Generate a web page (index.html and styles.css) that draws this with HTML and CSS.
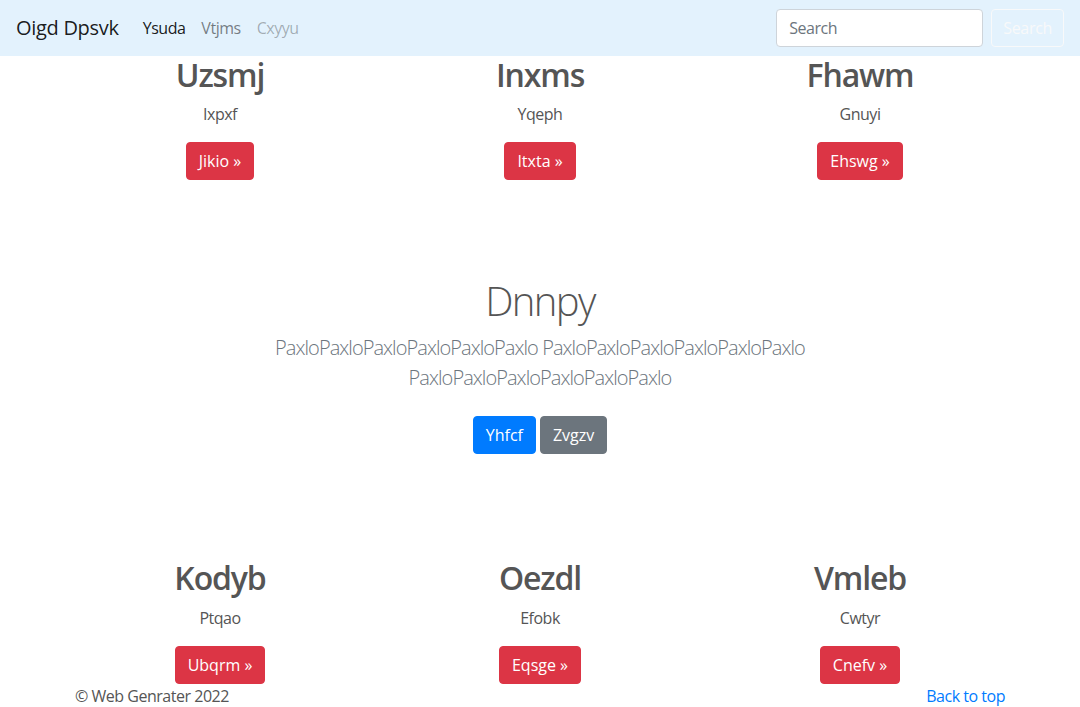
FILE: index.html
```html
<!DOCTYPE html>
<html lang="en">
<head>
<meta charset="utf-8">
<title>Oigd Dpsvk</title>
<link rel="stylesheet" href="styles.css">
</head>
<body>
<nav class="navbar">
  <a class="brand" href="#">Oigd Dpsvk</a>
  <ul class="nav">
    <li><a class="nav-link active" href="#">Ysuda</a></li>
    <li><a class="nav-link" href="#">Vtjms</a></li>
    <li><a class="nav-link disabled" href="#">Cxyyu</a></li>
  </ul>
  <form class="search">
    <input class="search-input" type="text" placeholder="Search">
    <button class="btn btn-outline-light" type="button">Search</button>
  </form>
</nav>
<main>
  <div class="container">
    <div class="row">
      <div class="col"><h2>Uzsmj</h2><p>Ixpxf</p><p><a class="btn btn-danger" href="#">Jikio »</a></p></div>
      <div class="col"><h2>Inxms</h2><p>Yqeph</p><p><a class="btn btn-danger" href="#">Itxta »</a></p></div>
      <div class="col"><h2>Fhawm</h2><p>Gnuyi</p><p><a class="btn btn-danger" href="#">Ehswg »</a></p></div>
    </div>
  </div>
  <section class="hero">
    <h1>Dnnpy</h1>
    <p class="lead">PaxloPaxloPaxloPaxloPaxloPaxlo PaxloPaxloPaxloPaxloPaxloPaxlo<br>PaxloPaxloPaxloPaxloPaxloPaxlo</p>
    <div class="hero-actions">
      <a class="btn btn-primary" href="#">Yhfcf</a>
      <a class="btn btn-secondary" href="#">Zvgzv</a>
    </div>
  </section>
  <div class="container">
    <div class="row">
      <div class="col"><h2>Kodyb</h2><p>Ptqao</p><p class="last"><a class="btn btn-danger" href="#">Ubqrm »</a></p></div>
      <div class="col"><h2>Oezdl</h2><p>Efobk</p><p class="last"><a class="btn btn-danger" href="#">Eqsge »</a></p></div>
      <div class="col"><h2>Vmleb</h2><p>Cwtyr</p><p class="last"><a class="btn btn-danger" href="#">Cnefv »</a></p></div>
    </div>
  </div>
</main>
<footer class="footer">
  <div class="footer-inner">
    <p class="copy">© Web Genrater 2022</p>
    <a class="top-link" href="#">Back to top</a>
  </div>
</footer>
</body>
</html>
```
FILE: styles.css
```css
* { box-sizing: border-box; }
html, body { margin: 0; }
body {
  font-family: "Segoe UI", "Open Sans", "Noto Sans", sans-serif;
  font-size: 16px;
  line-height: 1.5;
  letter-spacing: -0.03em;
  color: #555;
  background: #fff;
}
a { text-decoration: none; }
p { margin: 0 0 16px; }

.navbar {
  display: flex;
  align-items: center;
  height: 56px;
  padding: 8px 16px;
  background: #e3f2fd;
}
.brand {
  font-size: 20px;
  line-height: 30px;
  letter-spacing: -0.015em;
  color: rgba(0,0,0,.9);
  margin-right: 16px;
}
.nav {
  display: flex;
  list-style: none;
  margin: 0;
  padding: 0;
  flex: 1;
}
.nav-link {
  display: block;
  padding: 8px;
  color: rgba(0,0,0,.5);
}
.nav-link.active { color: rgba(0,0,0,.9); }
.nav-link.disabled { color: rgba(0,0,0,.3); }
.search { display: flex; align-items: center; }
.search-input {
  width: 207px;
  height: 38px;
  padding: 6px 12px;
  font: inherit;
  letter-spacing: inherit;
  color: #495057;
  border: 1px solid #ced4da;
  border-radius: 4px;
  margin-right: 8px;
  background: #fff;
}
.search-input::placeholder { color: #6c757d; }

.btn {
  display: inline-block;
  padding: 6px 12px;
  font: inherit;
  letter-spacing: 0;
  line-height: 24px;
  border: 1px solid transparent;
  border-radius: 4px;
  color: #fff;
  cursor: pointer;
  vertical-align: middle;
}
.btn-outline-light { background: transparent; border-color: #f8f9fa; color: #f8f9fa; padding: 6px 11px; letter-spacing: -0.02em; }
.btn-danger { background: #dc3545; border-color: #dc3545; }
.btn-primary { background: #007bff; border-color: #007bff; }
.btn-secondary { background: #6c757d; border-color: #6c757d; }

.container {
  max-width: 960px;
  margin: 0 auto;
  padding: 0 15px;
}
.row {
  display: grid;
  grid-template-columns: repeat(3, 1fr);
  margin: 0 -15px;
}
.col { padding: 0 15px; text-align: center; }
h2 {
  font-size: 32px;
  font-weight: 600;
  line-height: 1.2;
  letter-spacing: -0.035em;
  margin: 0 0 8px;
  color: #555;
}
.last { margin-bottom: 0; }

.hero {
  text-align: center;
  padding: 81px 32px 105px;
}
h1 {
  font-size: 40px;
  font-weight: 300;
  line-height: 1.2;
  letter-spacing: -0.04em;
  margin: 0 0 8px;
  color: #555;
}
.lead {
  font-size: 20px;
  font-weight: 300;
  line-height: 30px;
  letter-spacing: -0.047em;
  color: #6c757d;
  margin-bottom: 23px;
}
.hero-actions { display: flex; justify-content: center; gap: 4px; }

.footer-inner {
  max-width: 960px;
  margin: 0 auto;
  padding: 0 15px;
  display: flex;
  justify-content: space-between;
  align-items: flex-start;
}
.copy { margin: 0; }
.top-link { color: #007bff; }
```
